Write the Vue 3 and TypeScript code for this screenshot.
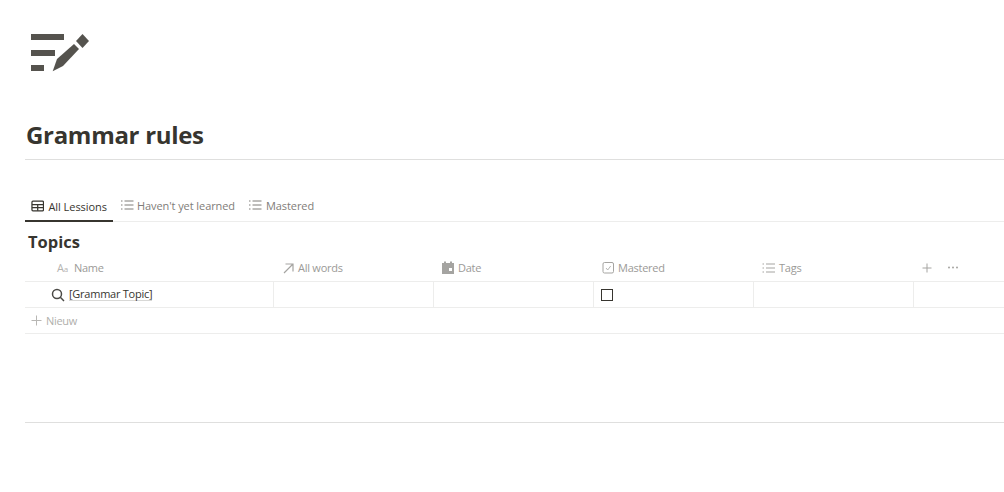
<script setup lang="ts">
interface Column {
  label: string;
  icon: string;
}

const columns: Column[] = [
  { label: "All words", icon: "relation" },
  { label: "Date", icon: "date" },
  { label: "Mastered", icon: "check" },
  { label: "Tags", icon: "list" },
];
</script>

<template>
  <main class="page">
    <svg class="page-icon" width="60" height="40" viewBox="0 0 60 40">
      <path d="M1 0h33v6H1zM1 16h24v6H1zM1 31h13v6H1z" fill="#55534e" />
      <path d="M22.700 37.200L27 25 44 10l5 5-16 17z" fill="#55534e" />
      <path d="M46 7l6.500-7 6.500 7-6.500 7z" fill="#55534e" />
    </svg>

    <h1 class="title">Grammar rules</h1>

    <div class="tabs">
      <div class="tab active">
        <svg width="14" height="14" viewBox="0 0 14 14" fill="none" stroke="currentColor" stroke-width="1.300">
          <rect x="1" y="2" width="12" height="10" rx="1" />
          <path d="M1 5.500h12M1 8.800h12M7 5.500V12" />
        </svg>
        <span>All Lessions</span>
      </div>
      <div class="tab">
        <svg width="14" height="14" viewBox="0 0 14 14" fill="none" stroke="currentColor" stroke-width="1">
          <path d="M4.500 3h9M4.500 7h9M4.500 11h9M1 3h1.500M1 7h1.500M1 11h1.500" />
        </svg>
        <span>Haven't yet learned</span>
      </div>
      <div class="tab">
        <svg width="14" height="14" viewBox="0 0 14 14" fill="none" stroke="currentColor" stroke-width="1">
          <path d="M4.500 3h9M4.500 7h9M4.500 11h9M1 3h1.500M1 7h1.500M1 11h1.500" />
        </svg>
        <span>Mastered</span>
      </div>
    </div>

    <h2 class="db-title">Topics</h2>

    <div class="table">
      <div class="row head">
        <div class="cell name-cell head-name">
          <span class="aa">A<small>a</small></span>
          <span>Name</span>
        </div>
        <div v-for="col in columns" :key="col.label" class="cell head-cell">
          <svg v-if="col.icon === 'relation'" width="14" height="14" viewBox="0 0 14 14" fill="none" stroke="#a5a4a1" stroke-width="1.200">
            <path d="M2 12L10.500 3.500M3.500 3h7.500v7.500" />
          </svg>
          <svg v-else-if="col.icon === 'date'" width="14" height="14" viewBox="0 0 14 14">
            <path d="M0 2h2V0.500h2V2h4V0.500h2V2h2v11H0z" fill="#a5a4a1" />
            <rect x="7" y="7" width="3" height="3" fill="#fff" />
          </svg>
          <svg v-else-if="col.icon === 'check'" width="14" height="14" viewBox="0 0 14 14" fill="none" stroke="#a5a4a1">
            <rect x="1" y="1.500" width="10.500" height="10.500" rx="1.500" />
            <path d="M4 7l1.700 2 3-4" stroke-width="0.800" />
          </svg>
          <svg v-else width="14" height="14" viewBox="0 0 14 14" fill="none" stroke="#a5a4a1">
            <path d="M4 3h9M4 7h9M4 11h9M0.500 3h1.500M0.500 7h1.500M0.500 11h1.500" />
          </svg>
          <span :class="{ 'tags-label': col.icon === 'list' }">{{ col.label }}</span>
        </div>
        <div class="cell head-actions">
          <svg width="10" height="10" viewBox="0 0 10 10" fill="none" stroke="#a5a4a1">
            <path d="M5 0.500v9M0.500 5h9" />
          </svg>
          <svg class="dots" width="10" height="3" viewBox="0 0 10 3" fill="#a5a4a1">
            <rect y="0.500" width="2" height="2" rx="1" />
            <rect x="4" y="0.500" width="2" height="2" rx="1" />
            <rect x="8" y="0.500" width="2" height="2" rx="1" />
          </svg>
        </div>
      </div>

      <div class="row body">
        <div class="cell name-cell body-name bordered">
          <svg width="14" height="14" viewBox="0 0 14 14" fill="none" stroke="#4b4a46" stroke-width="1.500">
            <circle cx="6" cy="6" r="4.500" />
            <path d="M9.300 9.300l3.700 3.700" />
          </svg>
          <span class="page-link">[Grammar Topic]</span>
        </div>
        <div class="cell bordered" />
        <div class="cell bordered" />
        <div class="cell bordered check-cell"><span class="checkbox" /></div>
        <div class="cell bordered" />
        <div class="cell bordered" />
      </div>

      <div class="new-row">
        <svg width="11" height="11" viewBox="0 0 11 11" fill="none" stroke="#b8b7b4">
          <path d="M5.500 0.500v10M0.500 5.500h10" />
        </svg>
        <span>Nieuw</span>
      </div>
    </div>

    <div class="divider" />
  </main>
</template>

<style>
html,
body {
  margin: 0;
  background: #fff;
  overflow: hidden;
}
</style>

<style scoped>
.page {
  width: 1004px;
  height: 492px;
  box-sizing: border-box;
  padding: 34px 0 0 25px;
  font-family: "Open Sans", "Noto Sans", "Liberation Sans", sans-serif;
  color: #37352f;
}

.page-icon {
  display: block;
  margin-left: 5px;
}

.title {
  margin: 36px 0 0;
  height: 49px;
  padding-left: 1px;
  font-size: 24px;
  line-height: 50px;
  font-weight: 700;
  letter-spacing: -0.3px;
  border-bottom: 1px solid #dfdfde;
  box-sizing: content-box;
}

.tabs {
  display: flex;
  height: 29px;
  margin-top: 32px;
  border-bottom: 1px solid #ededec;
  font-size: 11px;
  letter-spacing: -0.08px;
  color: #7f7d79;
}

.tab {
  display: flex;
  align-items: center;
  gap: 3px;
  padding: 0 7px 3px 6px;
  height: 29px;
  box-sizing: border-box;
  white-space: nowrap;
}

.tab:last-child {
  gap: 4px;
}

.tab.active {
  width: 88px;
  gap: 4px;
  color: #37352f;
  border-bottom: 2px solid #37352f;
  padding: 0 6px;
  margin-right: 1px;
  height: 30px;
  letter-spacing: -0.05px;
}

.db-title {
  margin: 0;
  height: 36px;
  padding-left: 3px;
  font-size: 16.500px;
  line-height: 40px;
  font-weight: 700;
}

.row {
  display: grid;
  grid-template-columns: 249px repeat(4, 160px) 1fr;
  box-sizing: border-box;
  border-bottom: 1px solid #ededec;
}

.head {
  height: 24px;
  padding-bottom: 4px;
  font-size: 11px;
  letter-spacing: -0.25px;
  color: #9b9a97;
}

.cell {
  display: flex;
  align-items: center;
  box-sizing: border-box;
  min-width: 0;
}

.head-name {
  padding-left: 32px;
  gap: 6px;
}

.aa {
  font-size: 11px;
  color: #b5b4b1;
}

.aa small {
  font-size: 8px;
}

.head-cell {
  padding-left: 8px;
  gap: 2px;
}

.tags-label {
  margin-left: 1px;
}

.head-actions {
  padding-left: 8px;
  gap: 16px;
}

.body {
  height: 26px;
}

.bordered {
  border-right: 1px solid #ededec;
}

.bordered:last-child {
  border-right: 0;
}

.body-name {
  padding-left: 26px;
  gap: 3px;
}

.page-link {
  margin: 0 0 2px 1px;
  font-size: 11px;
  letter-spacing: -0.25px;
  color: #37352f;
  border-bottom: 1px solid #d8d8d6;
  line-height: 13px;
}

.check-cell {
  padding-left: 7px;
}

.checkbox {
  display: block;
  width: 12px;
  height: 12px;
  box-sizing: border-box;
  border: 1px solid #37352f;
}

.new-row {
  display: flex;
  align-items: center;
  gap: 4px;
  height: 26px;
  box-sizing: border-box;
  padding-left: 6px;
  border-bottom: 1px solid #ededec;
  font-size: 11px;
  letter-spacing: -0.3px;
  color: #b0afac;
}

.divider {
  height: 1px;
  margin-top: 88px;
  background: #dfdfde;
}
</style>
